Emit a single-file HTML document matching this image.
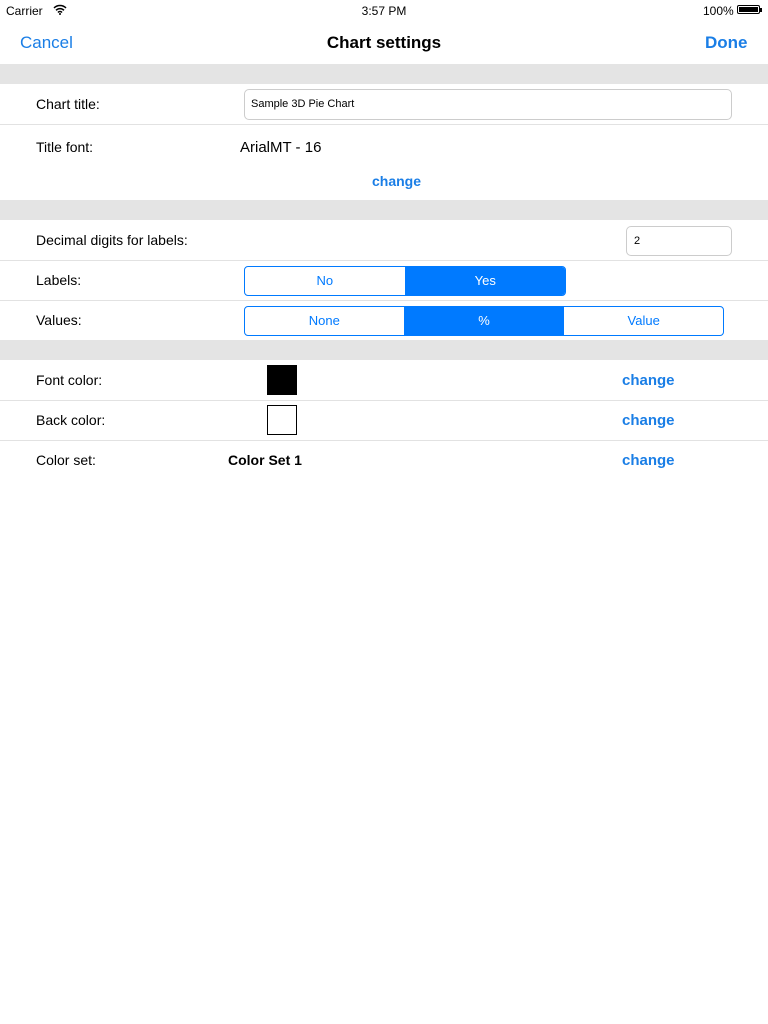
<!DOCTYPE html><html><head><style>
body{margin:0;width:768px;height:1024px;background:#fff;font-family:"Liberation Sans",sans-serif;position:relative;overflow:hidden}
.a{position:absolute}
.l{position:absolute;left:36px;font-size:14px;color:#000}
.band{position:absolute;left:0;width:768px;height:20px;background:#e4e4e4}
.sep{position:absolute;left:0;width:768px;height:1px;background:#e2e2e2}
.ch{position:absolute;left:622px;font-size:15px;font-weight:bold;color:#1a7ee6}
.seg{position:absolute;border:1px solid #007aff;border-radius:4px;display:flex;overflow:hidden;box-sizing:border-box}
.seg div{flex:1;text-align:center;font-size:13px;color:#007aff;line-height:28px;border-left:1px solid #007aff}
.seg div:first-child{border-left:none}
.seg .on{background:#007aff;color:#fff}
</style></head><body>
<div class="a" style="left:6px;top:4px;font-size:12px">Carrier</div>
<svg class="a" style="left:53px;top:4px" width="14" height="11" viewBox="0 0 14 11"><path d="M1 4a8.5 8.5 0 0 1 12 0M3 6.3a5.5 5.5 0 0 1 8 0M5 8.5a2.6 2.6 0 0 1 4 0" stroke="#000" stroke-width="1.5" fill="none"/><circle cx="7" cy="10" r="1" fill="#000"/></svg>
<div class="a" style="left:0;width:768px;top:4px;text-align:center;font-size:12px">3:57 PM</div>
<div class="a" style="left:703px;top:4px;font-size:12px">100%</div>
<div class="a" style="left:737px;top:5px;width:23px;height:9px;border:1px solid #000;border-radius:2px;box-sizing:border-box;padding:1px"><div style="background:#000;width:100%;height:100%"></div></div>
<div class="a" style="left:760px;top:8px;width:2px;height:4px;background:#000"></div>
<div class="a" style="left:20px;top:33px;font-size:17px;color:#1a7ee6">Cancel</div>
<div class="a" style="left:0;width:768px;top:33px;text-align:center;font-size:17px;font-weight:bold">Chart settings</div>
<div class="a" style="left:705px;top:33px;font-size:17px;font-weight:bold;color:#1a7ee6">Done</div>
<div class="band" style="top:64px"></div>
<div class="l" style="top:96px">Chart title:</div>
<div class="a" style="left:244px;top:89px;width:488px;height:31px;border:1px solid #ccc;border-radius:5px;box-sizing:border-box;font-size:11px;padding:8px 6px 0">Sample 3D Pie Chart</div>
<div class="sep" style="top:124px"></div>
<div class="l" style="top:139px">Title font:</div>
<div class="a" style="left:240px;top:139px;font-size:15px">ArialMT - 16</div>
<div class="a" style="left:372px;top:173px;font-size:14px;font-weight:bold;color:#1a7ee6">change</div>
<div class="band" style="top:200px"></div>
<div class="l" style="top:232px">Decimal digits for labels:</div>
<div class="a" style="left:626px;top:226px;width:106px;height:30px;border:1px solid #ccc;border-radius:5px;box-sizing:border-box;font-size:11px;padding:8px 7px 0">2</div>
<div class="sep" style="top:260px"></div>
<div class="l" style="top:272px">Labels:</div>
<div class="seg" style="left:244px;top:266px;width:322px;height:30px"><div>No</div><div class="on">Yes</div></div>
<div class="sep" style="top:300px"></div>
<div class="l" style="top:312px">Values:</div>
<div class="seg" style="left:244px;top:306px;width:480px;height:30px"><div>None</div><div class="on">%</div><div>Value</div></div>
<div class="band" style="top:340px"></div>
<div class="l" style="top:372px">Font color:</div>
<div class="a" style="left:267px;top:365px;width:30px;height:30px;background:#000"></div>
<div class="ch" style="top:372px">change</div>
<div class="sep" style="top:400px"></div>
<div class="l" style="top:412px">Back color:</div>
<div class="a" style="left:267px;top:405px;width:30px;height:30px;border:1px solid #000;box-sizing:border-box"></div>
<div class="ch" style="top:412px">change</div>
<div class="sep" style="top:440px"></div>
<div class="l" style="top:452px">Color set:</div>
<div class="a" style="left:228px;top:452px;font-size:14px;font-weight:bold">Color Set 1</div>
<div class="ch" style="top:452px">change</div>
</body></html>
